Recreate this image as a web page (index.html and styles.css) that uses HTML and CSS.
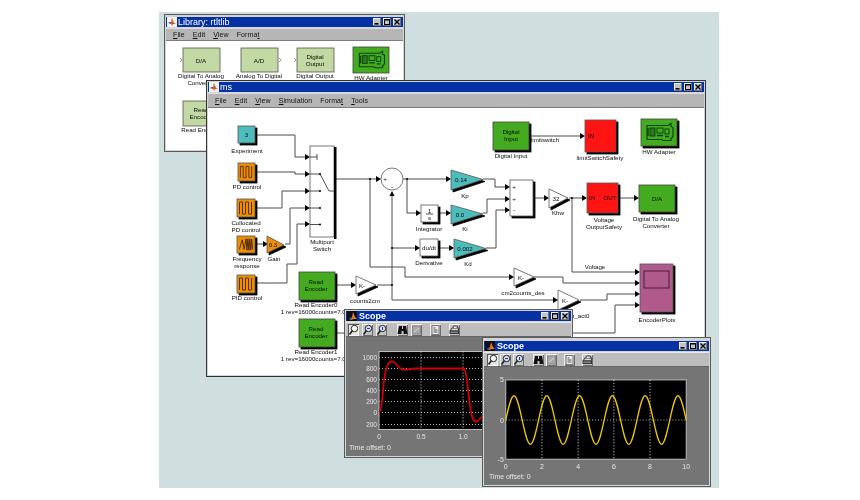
FILE: index.html
```html
<!DOCTYPE html>
<html lang="en">
<head>
<meta charset="utf-8">
<title>Simulink models and scopes</title>
<link rel="stylesheet" href="styles.css">
</head>
<body>
<svg class="defs" aria-hidden="true">
  <symbol id="wmin" viewBox="0 0 8 8"><rect x="1.5" y="5" width="4" height="1.6" fill="#000"/></symbol>
  <symbol id="wmax" viewBox="0 0 8 8"><rect x="1.5" y="1.5" width="5" height="5" fill="none" stroke="#000"/><path d="M1.5 2h5" stroke="#000"/></symbol>
  <symbol id="wclose" viewBox="0 0 8 8"><path d="M1.5 1.5l5 5M6.5 1.5l-5 5" stroke="#000" stroke-width="1.3"/></symbol>
  <symbol id="mllogo" viewBox="0 0 10 10"><rect width="10" height="10" fill="#f2f2f2"/><path d="M1 6l3-1 1-4 2 5 2 1-3 0-1 2-1-3z" fill="#d8501c"/><path d="M4 5l1-4 1 3z" fill="#f0a020"/><path d="M1 6l3-1v2z" fill="#3050a0"/></symbol>
  <symbol id="scopelogo" viewBox="0 0 10 10"><rect width="10" height="10" fill="#101018"/><path d="M2 8l3-2 1-5 2 5 2 2H6L5 9z" fill="#e8781c"/><path d="M2 8l3-2v2z" fill="#3060c0"/></symbol>
  <symbol id="pcb" viewBox="0 0 36 27">
    <path d="M6 6.500h21l3 -2v3l2 1v9l-2 2v2h-8l-1 -1h-15z" fill="none" stroke="#0c4414" stroke-width="1.200"/>
    <rect x="9" y="9" width="5" height="8" fill="#2a7a1c" stroke="#0c4414"/>
    <rect x="16" y="9" width="6" height="5" fill="none" stroke="#0c4414"/>
    <rect x="24" y="10" width="4" height="5" fill="none" stroke="#0c4414"/>
    <path d="M16 16.500h6M24 17.500h4M7 9v8" stroke="#0c4414" stroke-width="1.500"/>
  </symbol>
  <symbol id="pulse" viewBox="0 0 18 18">
    <path d="M2.500 15V3h3v12h3V3h3v12h3V3" fill="none" stroke="#5a3000" stroke-width="1"/>
  </symbol>
  <symbol id="chirp" viewBox="0 0 18 18">
    <path d="M2 14L5 4l2 10 2-11 1 12 1-12 1 12 1-12 1 12 1-12 1 11" fill="none" stroke="#4a2800" stroke-width="1"/>
  </symbol>
  <symbol id="arrow" viewBox="-5 -3 5 6" overflow="visible"><polygon points="-5,-3 0,0 -5,3" fill="#000"/></symbol>
  <symbol id="mag" viewBox="0 0 11 12"><circle cx="6.500" cy="4.500" r="3.200" fill="#fff" stroke="#222"/><path d="M4.500 6.500L1.500 10.500" stroke="#222" stroke-width="1.500"/></symbol>
  <symbol id="magx" viewBox="0 0 11 12"><circle cx="6.500" cy="4.500" r="3.200" fill="#dfe6f6" stroke="#222"/><path d="M5 4.500h3" stroke="#2040c0" stroke-width="1.200"/><path d="M4.500 6.500L1.500 10.500" stroke="#222" stroke-width="1.500"/></symbol>
  <symbol id="magy" viewBox="0 0 11 12"><circle cx="6.500" cy="4.500" r="3.200" fill="#dfe6f6" stroke="#222"/><path d="M6.500 3v3" stroke="#2040c0" stroke-width="1.200"/><path d="M4.500 6.500L1.500 10.500" stroke="#222" stroke-width="1.500"/></symbol>
  <symbol id="binoc" viewBox="0 0 11 12"><path d="M.5 10l1.500-8h3v3h1V2h3l1.500 8H6.500V7h-2v3z" fill="#111"/></symbol>
  <symbol id="grayed" viewBox="0 0 11 12"><rect x="1.500" y="2" width="8" height="8" fill="#a8a8a8" stroke="#888"/><path d="M3 8l5-4" stroke="#ddd"/></symbol>
  <symbol id="props" viewBox="0 0 11 12"><rect x="2" y="1.500" width="7" height="9" fill="#ececec" stroke="#777"/><path d="M3.500 4h2M3.500 6h4M3.500 8h4" stroke="#555"/></symbol>
  <symbol id="printer" viewBox="0 0 11 12"><path d="M1 7l2-3h7l-1 3z" fill="#ddd" stroke="#333"/><rect x="1" y="7" width="8.500" height="2.500" fill="#888" stroke="#333"/><path d="M4 4l.5-2h4L8 4" fill="#eee" stroke="#444"/></symbol>
</svg>

<main class="desktop">

  <section class="win win-lib">
    <header class="titlebar">
      <svg class="logo"><use href="#mllogo"/></svg>
      <span class="title">Library: rtltlib</span>
      <span class="wbtns">
        <svg class="wb"><use href="#wmin"/></svg><svg class="wb"><use href="#wmax"/></svg><svg class="wb"><use href="#wclose"/></svg>
      </span>
    </header>
    <nav class="menu"><span><u>F</u>ile</span><span><u>E</u>dit</span><span><u>V</u>iew</span><span>Forma<u>t</u></span></nav>
    <div class="canvas">
      <svg class="fill" viewBox="166 41 237 109">
        <g class="chev"><path d="M180 58l2 2-2 2M279 58l2 2-2 2M294 58l2 2-2 2"/></g>
        <rect class="lib" x="183" y="48" width="37" height="24"/>
        <rect class="lib" x="241" y="48" width="37" height="24"/>
        <rect class="lib" x="297" y="48" width="37" height="24"/>
        <rect class="lib" x="183" y="101" width="37" height="25"/>
        <rect class="green" x="353" y="47" width="36" height="26"/>
        <use href="#pcb" x="353" y="47" width="36" height="26"/>
        <text class="t" x="201" y="62.500">D/A</text>
        <text class="t" x="259" y="62.500">A/D</text>
        <text class="t" x="315" y="58.500">Digital</text>
        <text class="t" x="315" y="66">Output</text>
        <text class="t" x="201" y="112">Read</text>
        <text class="t" x="201" y="119">Encoder</text>
        <text class="t" x="201" y="78">Digital To Analog</text>
        <text class="t" x="201" y="85">Converter</text>
        <text class="t" x="259" y="78">Analog To Digital</text>
        <text class="t" x="315" y="78">Digital Output</text>
        <text class="t" x="371" y="79.500">HW Adapter</text>
        <text class="t" x="201" y="132">Read Encoder</text>
      </svg>
    </div>
  </section>

  <section class="win win-ms">
    <header class="titlebar">
      <svg class="logo"><use href="#mllogo"/></svg>
      <span class="title">ms</span>
      <span class="wbtns">
        <svg class="wb"><use href="#wmin"/></svg><svg class="wb"><use href="#wmax"/></svg><svg class="wb"><use href="#wclose"/></svg>
      </span>
    </header>
    <nav class="menu menu-ms"><span><u>F</u>ile</span><span><u>E</u>dit</span><span><u>V</u>iew</span><span><u>S</u>imulation</span><span>Forma<u>t</u></span><span><u>T</u>ools</span></nav>
    <div class="canvas">
      <svg class="fill" viewBox="208 108 496 267">
        <g class="wire">
          <path d="M257 135H295V157H305"/>
          <path d="M257 172H295V174H305"/>
          <path d="M257 208H282V191H305"/>
          <path d="M285 244H290V208H305"/>
          <path d="M256 283H287V264H297V224H305"/>
          <path d="M255 244H263"/>
          <path d="M336 179H376"/>
          <path d="M403 179H446"/>
          <path d="M407 179V213H416"/>
          <path d="M440 213H446"/>
          <path d="M392 196V300H553"/>
          <path d="M392 248H415"/>
          <path d="M440 248H449"/>
          <path d="M370 179V267H405V277H509"/>
          <path d="M336 285H351"/>
          <path d="M377 285H392"/>
          <path d="M534 277H563V283H635"/>
          <path d="M580 300H607V294H635"/>
          <path d="M336 333H345M573 333H615V305H635"/>
          <path d="M572 198V272H635"/>
          <path d="M483 179H495V187H505"/>
          <path d="M483 213H487V199H505"/>
          <path d="M486 248H496V210H505"/>
          <path d="M535 198H544"/>
          <path d="M569 198H582"/>
          <path d="M619 198H634"/>
          <path d="M530 136H580"/>
        </g>
        <g>
          <use class="ah" href="#arrow" x="305" y="154" width="5" height="6"/>
          <use class="ah" href="#arrow" x="305" y="171" width="5" height="6"/>
          <use class="ah" href="#arrow" x="305" y="188" width="5" height="6"/>
          <use class="ah" href="#arrow" x="305" y="205" width="5" height="6"/>
          <use class="ah" href="#arrow" x="305" y="221" width="5" height="6"/>
          <use class="ah" href="#arrow" x="263" y="241" width="5" height="6"/>
          <use class="ah" href="#arrow" x="376" y="176" width="5" height="6"/>
          <use class="ah" href="#arrow" x="446" y="176" width="5" height="6"/>
          <use class="ah" href="#arrow" x="416" y="210" width="5" height="6"/>
          <use class="ah" href="#arrow" x="446" y="210" width="5" height="6"/>
          <use class="ah" href="#arrow" x="415" y="245" width="5" height="6"/>
          <use class="ah" href="#arrow" x="449" y="245" width="5" height="6"/>
          <use class="ah" href="#arrow" x="509" y="274" width="5" height="6"/>
          <use class="ah" href="#arrow" x="553" y="297" width="5" height="6"/>
          <use class="ah" href="#arrow" x="351" y="282" width="5" height="6"/>
          <use class="ah" href="#arrow" x="635" y="269" width="5" height="6"/>
          <use class="ah" href="#arrow" x="635" y="280" width="5" height="6"/>
          <use class="ah" href="#arrow" x="635" y="291" width="5" height="6"/>
          <use class="ah" href="#arrow" x="635" y="302" width="5" height="6"/>
          <use class="ah" href="#arrow" x="505" y="184" width="5" height="6"/>
          <use class="ah" href="#arrow" x="505" y="196" width="5" height="6"/>
          <use class="ah" href="#arrow" x="505" y="207" width="5" height="6"/>
          <use class="ah" href="#arrow" x="544" y="195" width="5" height="6"/>
          <use class="ah" href="#arrow" x="582" y="195" width="5" height="6"/>
          <use class="ah" href="#arrow" x="634" y="195" width="5" height="6"/>
          <use class="ah" href="#arrow" x="580" y="133" width="5" height="6"/>
          <polygon points="389.500,196 392,191 394.500,196" fill="#000"/>
          <circle cx="370" cy="179" r="1" fill="#000"/>
          <circle cx="407" cy="179" r="1" fill="#000"/>
          <circle cx="392" cy="248" r="1" fill="#000"/>
          <circle cx="392" cy="285" r="1" fill="#000"/>
          <circle cx="572" cy="198" r="1" fill="#000"/>
        </g>

        <rect class="blk teal" x="238" y="126" width="17" height="17"/>
        <text class="t" x="246.500" y="137">3</text>
        <rect class="blk orange" x="238" y="163" width="17" height="18"/>
        <use href="#pulse" x="238" y="163" width="17" height="18"/>
        <rect class="blk orange" x="237" y="199" width="18" height="18"/>
        <use href="#pulse" x="237" y="199" width="18" height="18"/>
        <rect class="blk orange" x="237" y="236" width="18" height="17"/>
        <use href="#chirp" x="237" y="236" width="18" height="17"/>
        <rect class="blk orange" x="237" y="275" width="18" height="18"/>
        <use href="#pulse" x="237" y="275" width="18" height="18"/>
        <polygon class="blk orange" points="267,236 284,245 267,253"/>
        <text class="t" x="273" y="247">0.3</text>

        <rect class="blk green" x="299" y="272" width="36" height="28"/>
        <text class="t" x="316" y="284">Read</text>
        <text class="t" x="316" y="291">Encoder</text>
        <rect class="blk green" x="299" y="319" width="36" height="28"/>
        <text class="t" x="316" y="331">Read</text>
        <text class="t" x="316" y="338">Encoder</text>
        <polygon class="blk white" points="356,276 376,285 356,294"/>
        <text class="t" x="362" y="287.500">K-</text>

        <rect class="white sw" x="310" y="146" width="24" height="91"/>
        <rect x="334" y="147" width="2.500" height="92" fill="#000"/>
        <path class="wiret" d="M310 157H317M317 154V160M310 174H320L329 191H334M310 191H320M310 208H320M310 224.500H320"/>
        <circle cx="320" cy="174" r="1" fill="#000"/><circle cx="320" cy="191" r="1" fill="#000"/><circle cx="320" cy="208" r="1" fill="#000"/><circle cx="320" cy="224.500" r="1" fill="#000"/>

        <circle class="sum" cx="392" cy="179" r="11"/>
        <text class="t" x="385" y="181">+</text>
        <text class="t" x="392" y="189">-</text>

        <polygon class="blk teal" points="451,170 483,179.500 451,190"/>
        <text class="t" x="461" y="182">0.14</text>
        <polygon class="blk teal" points="451,205 483,214 451,224"/>
        <text class="t" x="460" y="216.500">0.0</text>
        <polygon class="blk teal" points="454,239 486,248.500 454,258"/>
        <text class="t" x="465" y="250.500">0.002</text>
        <rect class="blk white" x="421" y="205" width="17" height="17"/>
        <text class="t" x="429.500" y="212.500">1</text>
        <path class="wiret" d="M426 214H433"/>
        <text class="t" x="429.500" y="220">s</text>
        <rect class="blk white" x="420" y="239" width="18" height="17"/>
        <text class="t" x="429" y="250">du/dt</text>

        <rect class="blk white" x="510" y="180" width="23" height="36"/>
        <text class="t" x="514" y="189">+</text>
        <text class="t" x="514" y="201">+</text>
        <text class="t" x="514" y="212">-</text>

        <polygon class="blk white" points="549,189 568,198 549,208"/>
        <text class="t" x="556" y="200.500">32</text>
        <rect class="blk red" x="587" y="183" width="31" height="30"/>
        <text class="t" x="592" y="200">IN</text>
        <text class="t" x="610" y="200">OUT</text>
        <rect class="blk green" x="639" y="185" width="36" height="27"/>
        <text class="t" x="657" y="200.500">D/A</text>
        <rect class="blk green" x="493" y="122" width="36" height="28"/>
        <text class="t" x="511" y="134">Digital</text>
        <text class="t" x="511" y="141">Input</text>
        <rect class="blk red" x="585" y="120" width="31" height="32"/>
        <text class="t" x="591" y="138">IN</text>
        <rect class="blk green" x="641" y="119" width="36" height="27"/>
        <use href="#pcb" x="641" y="119" width="36" height="27"/>

        <polygon class="blk white" points="514,268 534,277 514,286"/>
        <text class="t" x="521" y="279.500">K-</text>
        <polygon class="blk white" points="558,290 579,300 558,310"/>
        <text class="t" x="565" y="302.500">K-</text>

        <rect class="blk scope" x="640" y="264" width="33" height="48"/>
        <rect class="scope-in" x="644" y="271" width="25" height="17"/>

        <text class="t" x="247" y="152.500">Experiment</text>
        <text class="t" x="247" y="188.500">PD control</text>
        <text class="t" x="246" y="225">Collocated</text>
        <text class="t" x="246" y="232">PD control</text>
        <text class="t" x="247" y="261">Frequency</text>
        <text class="t" x="247" y="268">response</text>
        <text class="t" x="274" y="261">Gain</text>
        <text class="t" x="247" y="300">PID control</text>
        <text class="t" x="322" y="244">Multiport</text>
        <text class="t" x="322" y="251">Switch</text>
        <text class="t" x="316" y="307">Read Encoder0</text>
        <text class="t" x="320" y="314">1 rev=16000counts=7.06 cm</text>
        <text class="t" x="316" y="354">Read Encoder1</text>
        <text class="t" x="320" y="361">1 rev=16000counts=7.06 cm</text>
        <text class="t" x="365" y="303">counts2cm</text>
        <text class="t" x="465" y="198">Kp</text>
        <text class="t" x="465" y="231">Ki</text>
        <text class="t" x="468" y="266">Kd</text>
        <text class="t" x="429" y="231">Integrator</text>
        <text class="t" x="429" y="265">Derivative</text>
        <text class="t" x="558" y="215">Khw</text>
        <text class="t" x="604" y="222">Voltage</text>
        <text class="t" x="604" y="229">OutputSafety</text>
        <text class="t" x="656" y="221">Digital To Analog</text>
        <text class="t" x="656" y="228">Converter</text>
        <text class="t" x="511" y="158">Digital Input</text>
        <text class="t" x="600" y="160">limitSwitchSafety</text>
        <text class="t" x="659" y="154">HW Adapter</text>
        <text class="t" x="545" y="142">limitswitch</text>
        <text class="t" x="595" y="269">Voltage</text>
        <text class="t" x="523" y="295">cm2counts_des</text>
        <text class="t" x="567" y="318">counts2cm_act0</text>
        <text class="t" x="657" y="322">EncoderPlots</text>
      </svg>
    </div>
  </section>

  <section class="win win-s1">
    <header class="titlebar">
      <svg class="logo"><use href="#scopelogo"/></svg>
      <span class="title title-b">Scope</span>
      <span class="wbtns">
        <svg class="wb"><use href="#wmin"/></svg><svg class="wb"><use href="#wmax"/></svg><svg class="wb"><use href="#wclose"/></svg>
      </span>
    </header>
    <div class="toolbar tb-wide">
      <span class="tbtn on"><svg><use href="#mag"/></svg></span>
      <span class="tbtn"><svg><use href="#magx"/></svg></span>
      <span class="tbtn"><svg><use href="#magy"/></svg></span>
      <span class="tbtn gap1"><svg><use href="#binoc"/></svg></span>
      <span class="tbtn"><svg><use href="#grayed"/></svg></span>
      <span class="tbtn gap2"><svg><use href="#props"/></svg></span>
      <span class="tbtn gap2"><svg><use href="#printer"/></svg></span>
    </div>
    <div class="scopebody">
      <svg class="fill" viewBox="346 338 225 118">
        <rect class="plot" x="379" y="352" width="170" height="78"/>
        <path class="grid" d="M379 358H549M379 369H549M379 380H549M379 391H549M379 402H549M379 413H549M379 425H549"/>
        <path class="grid gridv" d="M421 352V430M463 352V430M505 352V430"/>
        <path class="trace-red" d="M379 413C381 412 382 404 383 392C384 378 386 363 391 362C395 361 398 369 403 370C408 371 410 369 415 369L464 369C467 372 468 392 470 407C472 418 473 422 476 422C479 422 481 418 486 412"/>
        <text class="n" x="377" y="360">1000</text>
        <text class="n" x="377" y="371">800</text>
        <text class="n" x="377" y="382">600</text>
        <text class="n" x="377" y="393">400</text>
        <text class="n" x="377" y="404">200</text>
        <text class="n" x="377" y="415">0</text>
        <text class="n" x="377" y="427">200</text>
        <text class="nm" x="379" y="439.500">0</text>
        <text class="nm" x="421" y="439.500">0.5</text>
        <text class="nm" x="463" y="439.500">1.0</text>
        <text class="off" x="349" y="450.500">Time offset: 0</text>
      </svg>
    </div>
  </section>

  <section class="win win-s2">
    <header class="titlebar">
      <svg class="logo"><use href="#scopelogo"/></svg>
      <span class="title title-b">Scope</span>
      <span class="wbtns">
        <svg class="wb"><use href="#wmin"/></svg><svg class="wb"><use href="#wmax"/></svg><svg class="wb"><use href="#wclose"/></svg>
      </span>
    </header>
    <div class="toolbar">
      <span class="tbtn on"><svg><use href="#mag"/></svg></span>
      <span class="tbtn"><svg><use href="#magx"/></svg></span>
      <span class="tbtn"><svg><use href="#magy"/></svg></span>
      <span class="tbtn gap1"><svg><use href="#binoc"/></svg></span>
      <span class="tbtn"><svg><use href="#grayed"/></svg></span>
      <span class="tbtn gap2"><svg><use href="#props"/></svg></span>
      <span class="tbtn gap2"><svg><use href="#printer"/></svg></span>
    </div>
    <div class="scopebody">
      <svg class="fill" viewBox="484 366 225 119">
        <rect class="plot" x="505" y="379" width="182" height="80"/>
        <path class="grid" d="M505 419.500H687"/>
        <path class="grid gridv" d="M541.500 379V459M578 379V459M614 379V459M650.500 379V459"/>
        <path class="yel" d="M505 419.500c2.700 -12.500 5.280 -24.500 8.270 -24.500 s5.570 12 8.270 24.500 s5.280 24.500 8.270 24.500 s5.570 -12 8.270 -24.500 s5.280 -24.500 8.270 -24.500 s5.570 12 8.270 24.500 s5.280 24.500 8.270 24.500 s5.570 -12 8.270 -24.500 s5.280 -24.500 8.270 -24.500 s5.570 12 8.270 24.500 s5.280 24.500 8.270 24.500 s5.570 -12 8.270 -24.500 s5.280 -24.500 8.270 -24.500 s5.570 12 8.270 24.500 s5.280 24.500 8.270 24.500 s5.570 -12 8.270 -24.500 s5.280 -24.500 8.270 -24.500 s5.570 12 8.270 24.500 s5.280 24.500 8.270 24.500 s5.570 -12 8.270 -24.500 s5.280 -24.500 8.270 -24.500 s5.570 12 8.270 24.500"/>
        <text class="n2" x="503" y="381.500">5</text>
        <text class="n2" x="503" y="422">0</text>
        <text class="n2" x="503" y="461.500">-5</text>
        <text class="nm2" x="505" y="468.500">0</text>
        <text class="nm2" x="541.500" y="468.500">2</text>
        <text class="nm2" x="578" y="468.500">4</text>
        <text class="nm2" x="614" y="468.500">6</text>
        <text class="nm2" x="650.500" y="468.500">8</text>
        <text class="nm2" x="687" y="468.500">10</text>
        <text class="off" x="488" y="478.500">Time offset: 0</text>
      </svg>
    </div>
  </section>

</main>
</body>
</html>
```
FILE: styles.css
```css
html, body { margin: 0; padding: 0; background: #fff; }
body { font-family: "Liberation Sans", Arial, sans-serif; overflow: hidden; }

.defs { position: absolute; width: 0; height: 0; }

.desktop {
  position: relative;
  width: 560px;
  height: 476px;
  margin: 12px 0 0 159px;
  background: #cfdfdf;
  filter: blur(.3px);
}

.win {
  position: absolute;
  box-sizing: border-box;
  display: flex;
  flex-direction: column;
  background: #d4d4d4;
  border: 1px solid #5a5a5a;
  padding: 1px;
  overflow: hidden;
}
.win-lib { left: 5px; top: 2px; width: 241px; height: 138px; padding-top: 2px; }
.win-ms { left: 47px; top: 68px; width: 500px; height: 297px; border-color: #333; }
.win-s1 { left: 185px; top: 297px; width: 229px; height: 149px; }
.win-s2 { left: 323px; top: 325px; width: 229px; height: 150px; padding-top: 3px; }

.titlebar {
  flex: none;
  display: flex;
  align-items: center;
  height: 10px;
  background: #0432a4;
  color: #fff;
  font-size: 9px;
  line-height: 10px;
}
.logo { width: 10px; height: 10px; flex: none; margin-left: 1px; }
.title { margin-left: 1px; }
.title-b { font-weight: bold; margin-left: 2px; }
.wbtns { margin-left: auto; display: flex; gap: 2px; padding-right: 2px; }
.wb {
  width: 8px;
  height: 8px;
  display: block;
  background: #c4c4c4;
  box-shadow: inset -1px -1px 0 #777, inset 1px 1px 0 #eee;
}

.menu {
  flex: none;
  box-sizing: border-box;
  display: flex;
  gap: 8px;
  align-items: center;
  height: 13px;
  margin-top: 1px;
  padding: 0 0 0 7px;
  background: #b6b6b6;
  box-shadow: inset 0 -1px 0 #7d7d7d, inset 0 1px 0 #dcdcdc;
  color: #111;
  font-size: 7px;
  letter-spacing: .1px;
}
.menu-ms { height: 15px; }

.canvas { flex: 1; min-height: 0; background: #fff; }
.fill { display: block; width: 100%; height: 100%; }

.toolbar {
  flex: none;
  box-sizing: border-box;
  display: flex;
  align-items: center;
  gap: 2px;
  height: 15px;
  margin-top: 1px;
  padding: 0 0 0 3px;
  background: #bdbdbd;
  box-shadow: inset 0 -1px 0 #666, inset 0 1px 0 #e8e8e8;
}
.tb-wide { gap: 3px; padding-left: 2px; }
.tbtn {
  width: 11px;
  height: 12px;
  flex: none;
  background: #c4c4c4;
  box-shadow: inset 1px 1px 0 #f0f0f0, inset -1px -1px 0 #6c6c6c;
}
.tbtn svg { display: block; width: 11px; height: 12px; }
.tbtn.on { background: #e4e4e4; box-shadow: inset 1px 1px 0 #555, inset -1px -1px 0 #fff; }
.gap1 { margin-left: 7px; }
.gap2 { margin-left: 5px; }

.scopebody { flex: 1; min-height: 0; background: #757575; }

/* diagram */
.t { font-size: 6.2px; text-anchor: middle; fill: #0c0c0c; }
.wire path { fill: none; stroke: #4c4c4c; stroke-width: 1; }
.wiret { fill: none; stroke: #222; stroke-width: .8; }
.blk { stroke: #555; stroke-width: .8; filter: drop-shadow(2px 2px 0 #000); }
.teal { fill: #4fbcbc; }
.orange { fill: #ec8e08; }
.green { fill: #44aa1f; stroke: #444; stroke-width: .8; }
.white { fill: #fff; }
.red { fill: #ff1414; }
.scope { fill: #b05a8c; }
.scope-in { fill: none; stroke: #4a1a38; stroke-width: 1; }
.sw { stroke: #555; stroke-width: .8; }
.sum { fill: #fff; stroke: #555; stroke-width: .8; }
.lib { fill: #c2d9a3; stroke: #555; stroke-width: .8; }
.chev path { fill: none; stroke: #777; stroke-width: .8; }

/* scope plots */
.plot { fill: #000; stroke: #bdbdbd; stroke-width: 1; }
.grid { fill: none; stroke: #b8b8b8; stroke-width: 1; stroke-dasharray: 1 2; }
.gridv { stroke: #f0f0f0; }
.trace-red { fill: none; stroke: #d20000; stroke-width: 1.8; }
.yel { fill: none; stroke: #f2c800; stroke-width: 1.3; }
.n, .nm, .n2, .nm2, .off { fill: #e6e6e6; }
.n { font-size: 6.5px; text-anchor: end; }
.nm { font-size: 6.5px; text-anchor: middle; }
.n2 { font-size: 7px; text-anchor: end; }
.nm2 { font-size: 7px; text-anchor: middle; }
.off { font-size: 7px; }
```
